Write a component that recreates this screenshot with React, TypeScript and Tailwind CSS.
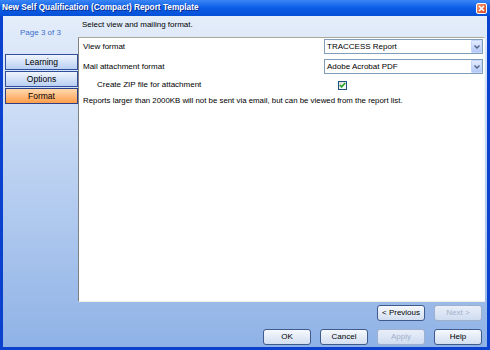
import React from "react";

function Select({ value }: { value: string }) {
  return (
    <div className="w-[159px] h-[15px] border border-[#7f9db9] bg-white flex items-center">
      <span className="flex-1 pl-[2px] text-[8px] leading-none text-black">{value}</span>
      <div className="w-[11px] h-[13px] mr-[0px] rounded-[1px] border border-[#c6d5fb] bg-gradient-to-b from-[#e3ebfe] to-[#b4c8f6] flex items-center justify-center">
        <svg width="6" height="4" viewBox="0 0 6 4">
          <path d="M0.5 0.5 L3 3 L5.5 0.5" fill="none" stroke="#4d6185" strokeWidth="1.3" />
        </svg>
      </div>
    </div>
  );
}

function Btn({ label, disabled }: { label: string; disabled?: boolean }) {
  return (
    <div
      className={
        disabled
          ? "w-[48px] h-[16px] rounded-[3px] border border-[#9fb0cf] bg-gradient-to-b from-[#e9eff9] to-[#cfdcf1] flex items-center justify-center text-[8px] leading-none text-[#a3b1c9]"
          : "w-[48px] h-[16px] rounded-[3px] border border-[#3f5a8c] bg-gradient-to-b from-[#f6f9fd] to-[#d3def0] flex items-center justify-center text-[8px] leading-none text-black"
      }
    >
      {label}
    </div>
  );
}

function SideBtn({ label, active }: { label: string; active?: boolean }) {
  return (
    <div
      className={
        active
          ? "ml-[2px] w-[73px] h-[16px] border border-[#2d3f86] bg-gradient-to-b from-[#ffd9ae] to-[#ff9c48] flex items-center justify-center text-[8.5px] leading-none text-black"
          : "ml-[2px] w-[73px] h-[16px] border border-[#2f4f9c] bg-gradient-to-b from-[#f0f5fd] to-[#b9cff2] flex items-center justify-center text-[8.5px] leading-none text-black"
      }
    >
      {label}
    </div>
  );
}

export default function App() {
  return (
    <div className="w-[490px] h-[350px] flex flex-col overflow-hidden font-['Liberation_Sans',Arial,sans-serif]">
      <div className="h-[16px] shrink-0 flex items-center justify-between pl-[2px] pr-[3px] bg-gradient-to-b from-[#3a86f6] via-[#0a5ce6] to-[#0551d6]">
        <span className="text-white font-bold text-[8.25px] leading-none [text-shadow:1px_1px_0_#0b2a8c]">
          New Self Qualification (Compact) Report Template
        </span>
        <div className="w-[11px] h-[11px] rounded-[2px] border border-white bg-gradient-to-br from-[#f39a6e] to-[#d4401b] flex items-center justify-center">
          <svg width="7" height="7" viewBox="0 0 7 7">
            <path d="M1 1 L6 6 M6 1 L1 6" stroke="white" strokeWidth="1.6" />
          </svg>
        </div>
      </div>
      <div className="flex-1 flex border-l-[3px] border-r-[3px] border-b-[3px] border-[#0a42cf] bg-gradient-to-b from-[#e4edfa] to-[#8fb2e6]">
        <div className="w-[75px] shrink-0 flex flex-col">
          <div className="pt-[12px] h-[22px] text-center text-[8px] leading-[10px] text-[#3d6dcc]">Page 3 of 3</div>
          <div className="mt-[16px] flex flex-col gap-[1px]">
            <SideBtn label="Learning" />
            <SideBtn label="Options" />
            <SideBtn label="Format" active />
          </div>
        </div>
        <div className="flex-1 flex flex-col">
          <div className="h-[21px] pt-[4px] pl-[4px] text-[8px] leading-[10px] text-black">Select view and mailing format.</div>
          <div className="h-[265px] mr-[2px] bg-white border-t border-t-[#aca899] border-l border-l-[#808080] border-b border-b-[#f1efe2] border-r border-r-[#f4f7fc] pl-[4px] flex flex-col text-[8px] text-black">
            <div className="mt-[1px] h-[15px] flex items-center">
              <span className="w-[241px] leading-none">View format</span>
              <Select value="TRACCESS Report" />
            </div>
            <div className="mt-[5px] h-[15px] flex items-center">
              <span className="w-[241px] leading-none">Mail attachment format</span>
              <Select value="Adobe Acrobat PDF" />
            </div>
            <div className="mt-[6px] h-[10px] flex items-center">
              <span className="w-[241px] pl-[14px] leading-none">Create ZIP file for attachment</span>
              <div className="ml-[14px] w-[9px] h-[9px] border border-[#1c5180] bg-gradient-to-br from-[#dcdcd6] to-[#ffffff] flex items-center justify-center">
                <svg width="7" height="6" viewBox="0 0 7 6">
                  <path d="M0.8 3 L2.6 4.8 L6.2 1" fill="none" stroke="#21a121" strokeWidth="1.5" />
                </svg>
              </div>
            </div>
            <div className="mt-[5px] h-[12px] flex items-center leading-none text-[7.85px]">
              Reports larger than 2000KB will not be sent via email, but can be viewed from the report list.
            </div>
          </div>
          <div className="pt-[3px] pr-[5px] flex flex-col items-end gap-[8px]">
            <div className="flex gap-[9px]">
              <Btn label="< Previous" />
              <Btn label="Next >" disabled />
            </div>
            <div className="flex gap-[9px]">
              <Btn label="OK" />
              <Btn label="Cancel" />
              <Btn label="Apply" disabled />
              <Btn label="Help" />
            </div>
          </div>
        </div>
      </div>
    </div>
  );
}
